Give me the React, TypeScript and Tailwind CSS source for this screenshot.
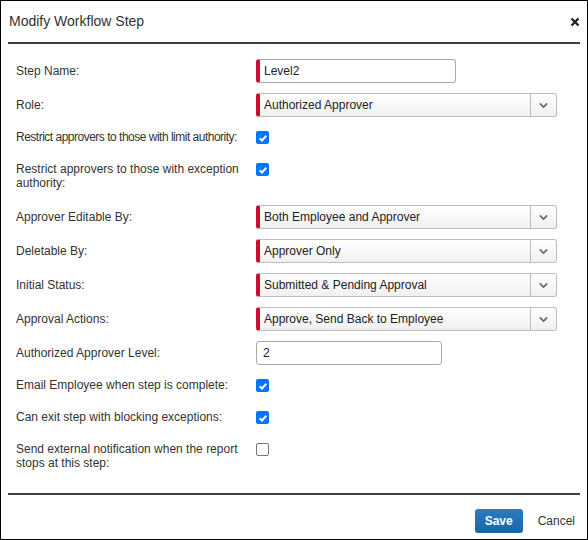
import { ChevronDown } from "lucide-react";

const font = "font-['Liberation_Sans',Arial,sans-serif]";

type Row =
  | { label: string; mt: string; kind: "text"; value: string; width: string; required?: boolean; tight?: boolean }
  | { label: string; mt: string; kind: "select"; value: string; tight?: boolean }
  | { label: string; mt: string; kind: "check"; checked: boolean; tight?: boolean };

// spacing between rows isn't uniform in the original, so each row carries its own top margin
const rows: Row[] = [
  { label: "Step Name:", mt: "mt-[15px]", kind: "text", value: "Level2", width: "w-[200px]", required: true },
  { label: "Role:", mt: "mt-[10px]", kind: "select", value: "Authorized Approver" },
  { label: "Restrict approvers to those with limit authority:", mt: "mt-[13px]", kind: "check", checked: true, tight: true },
  { label: "Restrict approvers to those with exception authority:", mt: "mt-[18px]", kind: "check", checked: true },
  { label: "Approver Editable By:", mt: "mt-[15px]", kind: "select", value: "Both Employee and Approver" },
  { label: "Deletable By:", mt: "mt-[10px]", kind: "select", value: "Approver Only" },
  { label: "Initial Status:", mt: "mt-[10px]", kind: "select", value: "Submitted & Pending Approval" },
  { label: "Approval Actions:", mt: "mt-[10px]", kind: "select", value: "Approve, Send Back to Employee" },
  { label: "Authorized Approver Level:", mt: "mt-[10px]", kind: "text", value: "2", width: "w-[186px]" },
  { label: "Email Employee when step is complete:", mt: "mt-[13px]", kind: "check", checked: true },
  { label: "Can exit step with blocking exceptions:", mt: "mt-[18px]", kind: "check", checked: true },
  { label: "Send external notification when the report stops at this step:", mt: "mt-[18px]", kind: "check", checked: false },
];

function Check({ checked }: { checked: boolean }) {
  if (!checked)
    return <div className="w-[13px] h-[13px] rounded-[2px] border border-[#767676] bg-white" />;
  return (
    <div className="w-[13px] h-[13px] rounded-[2px] bg-[#0075ff] flex items-center justify-center">
      <svg width="10" height="10" viewBox="0 0 10 10">
        <path d="M1.6 5.2 L4 7.5 L8.4 2.6" fill="none" stroke="white" strokeWidth="2" />
      </svg>
    </div>
  );
}

function Field({ row }: { row: Row }) {
  if (row.kind === "check") return <Check checked={row.checked} />;
  if (row.kind === "text")
    return (
      <div
        className={`${row.width} h-[24px] flex items-center rounded-[3px] border border-[#a9a9a9] bg-white text-[12px] text-[#222] ${
          row.required ? "border-l-[4px] border-l-[#c8102e] pl-[4px]" : "pl-[6px]"
        }`}
      >
        {row.value}
      </div>
    );
  return (
    <div className="w-[301px] h-[24px] flex rounded-[3px] border border-[#bdbdbd] border-l-[4px] border-l-[#c8102e] bg-gradient-to-b from-white to-[#f0f0f0] text-[12px] text-[#222]">
      <div className="flex-1 flex items-center pl-[4px]">{row.value}</div>
      <div className="w-[26px] border-l border-[#bdbdbd] flex items-center justify-center">
        <ChevronDown size={13} strokeWidth={3} className="text-[#5a6b7d]" />
      </div>
    </div>
  );
}

export default function App() {
  return (
    <div className={`w-[588px] h-[540px] border border-black bg-white flex flex-col ${font}`}>
      <div className="mx-[7px] h-[43px] flex items-center justify-between border-b-2 border-[#3c3f46] pl-[1px]">
        <span className="text-[14px] text-[#333]">Modify Workflow Step</span>
        <svg width="10" height="10" viewBox="0 0 10 10">
          <path d="M1.5 1.5 L8.5 8.5 M8.5 1.5 L1.5 8.5" stroke="#222" strokeWidth="2.4" />
        </svg>
      </div>

      <div className="flex-1 flex flex-col pl-[15px]">
        {rows.map((r) => (
          <div key={r.label} className={`flex ${r.mt} ${r.kind === "check" ? "items-start" : "items-center h-[24px]"}`}>
            <div
              className={`w-[240px] pr-[4px] text-[12px] leading-[14px] text-[#333] ${
                r.tight ? "whitespace-nowrap tracking-[-0.5px]" : ""
              }`}
            >
              {r.label}
            </div>
            <div className={r.kind === "check" ? "pt-[1px]" : ""}>
              <Field row={r} />
            </div>
          </div>
        ))}
      </div>

      <div className="mx-[7px] border-t-2 border-[#3c3f46] h-[46px] pt-[7px] flex items-center justify-end gap-[15px] pr-[5px]">
        <button className="w-[48px] h-[24px] rounded-[3px] bg-gradient-to-b from-[#2a7cc0] to-[#1b65a8] text-white text-[12px] font-bold">
          Save
        </button>
        <span className="text-[12px] text-[#333]">Cancel</span>
      </div>
    </div>
  );
}
